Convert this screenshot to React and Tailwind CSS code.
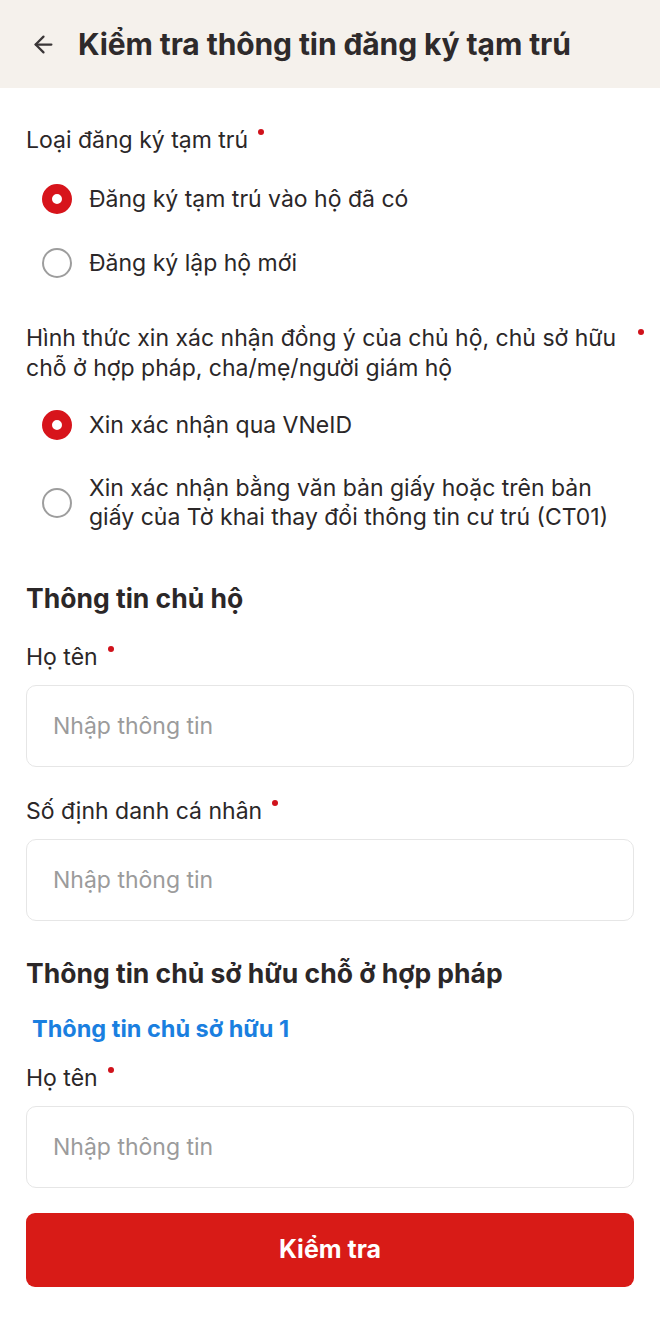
import { ArrowLeft } from "lucide-react";

const FONT = { fontFamily: "Inter, 'Liberation Sans', sans-serif" };

function Req() {
  return (
    <span className="inline-block w-[6px] h-[6px] rounded-full bg-[#d0121b] ml-[10px] align-top mt-[4px]" />
  );
}

function Radio({ checked, children }) {
  return (
    <div className="flex items-center gap-[17px] pl-[16px] py-[17px] min-h-[64px]">
      {checked ? (
        <span className="shrink-0 w-[30px] h-[30px] rounded-full border-[10px] border-[#d7141b] bg-white" />
      ) : (
        <span className="shrink-0 w-[30px] h-[30px] rounded-full border-2 border-[#9d9d9d] bg-white" />
      )}
      <span className="text-[23px] leading-[29px] text-[#2b2728]">{children}</span>
    </div>
  );
}

function Field({ label, className = "" }) {
  return (
    <div className={className}>
      <div className="text-[23px] leading-[30px] text-[#2b2728]">
        {label}
        <Req />
      </div>
      <div className="mt-[13px] h-[82px] rounded-[10px] border border-[#e6e6e6] flex items-center px-[26px]">
        <input
          placeholder="Nhập thông tin"
          className="w-full outline-none text-[23px] text-[#2b2728] placeholder:text-[#9b9b9b]"
          style={FONT}
        />
      </div>
    </div>
  );
}

export default function App() {
  return (
    <div className="w-[660px] min-h-[1322px] bg-white" style={FONT}>
      {/* HEADER */}
      <div className="h-[88px] bg-[#f5f1ec] flex items-center pl-[30px] gap-[21px]">
        <ArrowLeft size={27} strokeWidth={2} className="text-[#3a3637]" />
        <h1 className="text-[30px] font-bold text-[#2e2a2b] tracking-[-0.1px]">
          Kiểm tra thông tin đăng ký tạm trú
        </h1>
      </div>

      <div className="px-[26px]">
        {/* LOAI DANG KY */}
        <div className="mt-[37px] text-[23px] leading-[30px] text-[#2b2728]">
          Loại đăng ký tạm trú
          <Req />
        </div>
        <div className="mt-[12px]">
          <Radio checked>Đăng ký tạm trú vào hộ đã có</Radio>
          <Radio>Đăng ký lập hộ mới</Radio>
        </div>

        {/* HINH THUC */}
        <div className="mt-[28px] flex text-[23px] leading-[30px] text-[#2b2728]">
          <div className="flex-1">
            Hình thức xin xác nhận đồng ý của chủ hộ, chủ sở hữu chỗ ở hợp pháp, cha/mẹ/người giám hộ
          </div>
          <span className="inline-block w-[6px] h-[6px] rounded-full bg-[#d0121b] ml-[14px] mt-[6px] -mr-[10px]" />
        </div>
        <div className="mt-[10px]">
          <Radio checked>Xin xác nhận qua VNeID</Radio>
          <Radio>
            Xin xác nhận bằng văn bản giấy hoặc trên bản giấy của Tờ khai thay đổi thông tin cư trú (CT01)
          </Radio>
        </div>

        {/* CHU HO */}
        <h2 className="mt-[33px] text-[26.5px] leading-[32px] font-bold text-[#2b2728]">
          Thông tin chủ hộ
        </h2>
        <Field label="Họ tên" className="mt-[28px]" />
        <Field label="Số định danh cá nhân" className="mt-[29px]" />

        {/* CHU SO HUU */}
        <h2 className="mt-[36px] text-[26.5px] leading-[32px] font-bold text-[#2b2728]">
          Thông tin chủ sở hữu chỗ ở hợp pháp
        </h2>
        <div className="mt-[25px] ml-[6px] text-[23.5px] leading-[30px] font-bold text-[#1a7fe0]">
          Thông tin chủ sở hữu 1
        </div>
        <Field label="Họ tên" className="mt-[19px]" />

        <button className="mt-[25px] w-full h-[74px] rounded-[9px] bg-[#d81b17] text-white text-[25px] font-bold">
          Kiểm tra
        </button>
      </div>
    </div>
  );
}
